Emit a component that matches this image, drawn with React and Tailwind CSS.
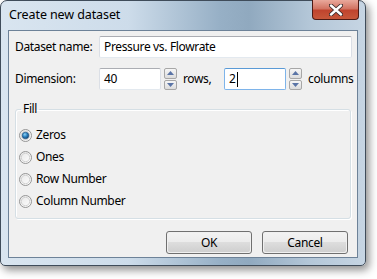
import React from 'react';

function Spin() {
    return (
        <div className="flex flex-col gap-[1px] ml-[3px] h-[22px]">
            {[0, 1].map((i) => (
                <div
                    key={i}
                    className="w-[13px] h-[11px] border border-[#a7a7a7] rounded-[2px] bg-gradient-to-b from-[#f6f6f6] to-[#dcdcdc] flex items-center justify-center"
                >
                    <svg width="7" height="4" viewBox="0 0 7 4">
                        {i === 0 ? (
                            <path d="M0 4 L3.5 0 L7 4 Z" fill="#5a74a6" />
                        ) : (
                            <path d="M0 0 L3.5 4 L7 0 Z" fill="#5a74a6" />
                        )}
                    </svg>
                </div>
            ))}
        </div>
    );
}

function Radio({ checked, label }) {
    return (
        <div className="flex items-center h-[22px]">
            <svg width="13" height="13" viewBox="0 0 13 13" className="mr-[4px]">
                <defs>
                    <linearGradient id="rf" x1="0" y1="0" x2="1" y2="1">
                        <stop offset="0" stopColor="#e6e6e6" />
                        <stop offset="1" stopColor="#ffffff" />
                    </linearGradient>
                    <radialGradient id="dot" cx="0.4" cy="0.35" r="0.7">
                        <stop offset="0" stopColor="#8fd3f5" />
                        <stop offset="0.5" stopColor="#2a80bf" />
                        <stop offset="1" stopColor="#0f3f6e" />
                    </radialGradient>
                </defs>
                <circle cx="6.5" cy="6.5" r="6" fill="url(#rf)" stroke="#959595" />
                <circle cx="6.5" cy="6.5" r="4.2" fill="none" stroke="#d2d2d2" />
                {checked && <circle cx="6.5" cy="6.5" r="3.3" fill="url(#dot)" stroke="#1d4f7c" strokeWidth="0.6" />}
            </svg>
            <span>{label}</span>
        </div>
    );
}

function Button({ children }) {
    return (
        <div className="w-[86px] h-[23px] border border-[#707070] rounded-[3px] p-[1px] bg-[#f0f0f0]">
            <div className="w-full h-full rounded-[2px] bg-[linear-gradient(#f2f2f2_0%,#ebebeb_50%,#dddddd_50%,#cfcfcf_100%)] flex items-center justify-center">
                {children}
            </div>
        </div>
    );
}

export default function App() {
    return (
        <div className="w-[377px] h-[279px] bg-white overflow-hidden font-['Noto_Sans',sans-serif] text-[12px] tracking-[-0.35px] text-black">
            <div className="w-[366px] h-[266px] rounded-t-[7px] rounded-b-[5px] border border-[#3f4c5a] shadow-[3px_4px_8px_rgba(0,0,0,0.45)] bg-[linear-gradient(90deg,#d9e5f0_0%,#cddcea_35%,#97b0c6_60%,#90a9bf_68%,#b4c7d8_85%,#c6d5e3_100%)] flex flex-col">
                <div className="h-[29px] flex items-start relative">
                    <div className="pl-[8px] pt-[5px] text-[12.5px] tracking-[-0.1px]">Create new dataset</div>
                    <div className="ml-auto mr-[6px] mt-[-1px] w-[47px] h-[20px] border border-[#4e1a14] border-t-0 rounded-b-[4px] bg-[linear-gradient(#e9a99c_0%,#d27463_45%,#c0442e_55%,#c7573a_100%)] flex items-center justify-center">
                        <svg width="14" height="12" viewBox="0 0 14 12">
                            <path d="M2 1.5 L12 10.5 M12 1.5 L2 10.5" stroke="#3a2a2a" strokeWidth="4.2" strokeLinecap="round" />
                            <path d="M2 1.5 L12 10.5 M12 1.5 L2 10.5" stroke="#ffffff" strokeWidth="2.4" strokeLinecap="round" />
                        </svg>
                    </div>
                </div>
                <div className="flex-1 mx-[7px] mb-[7px] border border-[#6d8298] bg-[#f0f0f0] flex flex-col">
                    <div className="flex items-center mt-[5px] pl-[6px] pr-[5px]">
                        <span className="w-[84px]">Dataset name:</span>
                        <div className="flex-1 h-[22px] border border-[#abadb3] border-b-[#e3e9ef] border-x-[#dbdfe6] rounded-[2px] bg-white flex items-center pl-[4px]">
                            Pressure vs. Flowrate
                        </div>
                    </div>
                    <div className="flex items-center mt-[10px] pl-[6px]">
                        <span className="w-[84px]">Dimension:</span>
                        <div className="w-[62px] h-[22px] border border-[#abadb3] border-b-[#e3e9ef] border-x-[#dbdfe6] rounded-[2px] bg-white flex items-center pl-[4px]">
                            40
                        </div>
                        <Spin />
                        <span className="ml-[6px] w-[41px]">rows,</span>
                        <div className="w-[62px] h-[22px] border border-[#7eb4ea] border-t-[#5a9ad6] rounded-[2px] bg-white flex items-center pl-[4px]">
                            2<span className="w-[1px] h-[15px] bg-black ml-[1px]" />
                        </div>
                        <Spin />
                        <span className="ml-[6px]">columns</span>
                    </div>
                    <fieldset className="mt-[11px] mx-[6px] h-[118px] border border-[#d5dfe5] rounded-[3px] pl-[3px] pr-0 pb-0 shadow-[inset_1px_1px_0_#ffffff,1px_1px_0_#ffffff]">
                        <legend className="px-[2px] ml-[2px] leading-[16px]">Fill</legend>
                        <div className="flex flex-col mt-[7px]">
                            <Radio checked label="Zeros" />
                            <Radio label="Ones" />
                            <Radio label="Row Number" />
                            <Radio label="Column Number" />
                        </div>
                    </fieldset>
                    <div className="flex justify-end gap-[10px] mt-auto mb-[3px] mr-[9px]">
                        <Button>OK</Button>
                        <Button>Cancel</Button>
                    </div>
                </div>
            </div>
        </div>
    );
}
